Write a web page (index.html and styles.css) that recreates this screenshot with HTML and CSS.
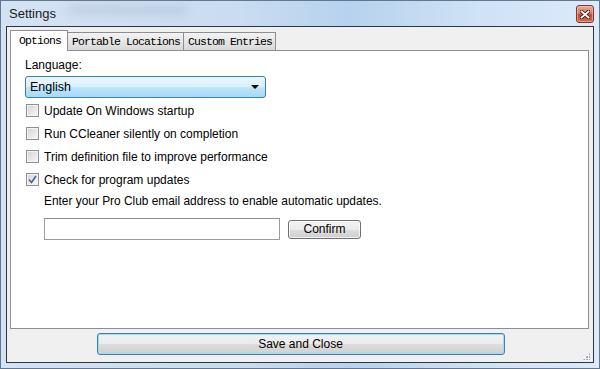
FILE: index.html
```html
<!DOCTYPE html>
<html>
<head>
    <title>Settings</title>
    <link rel="stylesheet" href="styles.css">
</head>
<body>
    <div class="window">
        <div class="titlebar">
            <span class="title">Settings</span>
            <span class="haze"></span>
            <button class="close-btn" title="Close">
                <svg width="10" height="9" viewBox="0 0 10 9">
                    <path d="M1.5 1.5 L8.5 7.5 M8.5 1.5 L1.5 7.5" stroke="#3a1a14" stroke-width="3.6" stroke-linecap="square"/>
                    <path d="M1.5 1.5 L8.5 7.5 M8.5 1.5 L1.5 7.5" stroke="#fff" stroke-width="1.8" stroke-linecap="square"/>
                </svg>
            </button>
        </div>
        <div class="client">
            <div class="tabs">
                <div class="tab active">Options</div>
                <div class="tab">Portable Locations</div>
                <div class="tab">Custom Entries</div>
            </div>
            <div class="panel">
                <div class="label">Language:</div>
                <div class="combo">
                    <span>English</span>
                    <span class="arrow"></span>
                </div>
                <div class="check-row"><span class="checkbox"></span>Update On Windows startup</div>
                <div class="check-row"><span class="checkbox"></span>Run CCleaner silently on completion</div>
                <div class="check-row"><span class="checkbox"></span>Trim definition file to improve performance</div>
                <div class="check-row">
                    <span class="checkbox checked">
                        <svg width="9" height="9" viewBox="0 0 9 9">
                            <path d="M1 4.5 L3.5 7.5 L8 1" fill="none" stroke="#4b5f96" stroke-width="1.6"/>
                        </svg>
                    </span>Check for program updates
                </div>
                <div class="pro-club">
                    <div class="hint">Enter your Pro Club email address to enable automatic updates.</div>
                    <div class="email-row">
                        <input type="text" class="email">
                        <button class="btn confirm">Confirm</button>
                    </div>
                </div>
            </div>
            <div class="footer">
                <button class="btn default">Save and Close</button>
            </div>
            <span class="grip"></span>
        </div>
    </div>
</body>
</html>
```

FILE: styles.css
```css
body {
    margin: 0;
    font-family: 'Liberation Sans', Arial, sans-serif;
    font-size: 12px;
    color: #000;
}
.window {
    width: 600px;
    height: 369px;
    box-sizing: border-box;
    border: 1px solid #62788f;
    padding: 0 5px 5px 5px;
    display: flex;
    flex-direction: column;
    background: linear-gradient(90deg, #d4e3f3 0%, #c9dcf1 40%, #b6d2ee 58%, #cfe2f6 80%, #dceafa 100%);
}
.titlebar {
    height: 25px;
    display: flex;
    align-items: flex-start;
    justify-content: space-between;
    position: relative;
}
.title {
    font-size: 13px;
    margin: 5px 0 0 3px;
    color: #1b1b1b;
}
.haze {
    position: absolute;
    left: 62px;
    top: 4px;
    width: 120px;
    height: 10px;
    border-radius: 6px;
    background: rgba(150, 165, 185, 0.25);
    filter: blur(4px);
}
.close-btn {
    width: 18px;
    height: 18px;
    margin-top: 4px;
    padding: 0;
    border: 1px solid #7a3a2c;
    border-radius: 3px;
    background: linear-gradient(#e8ab98 0%, #d97a63 45%, #c8472b 55%, #d66d4e 100%);
    display: flex;
    align-items: center;
    justify-content: center;
    box-shadow: inset 0 0 0 1px rgba(255, 210, 195, 0.5);
}
.client {
    flex: 1;
    position: relative;
    border: 1px solid #30353b;
    background: #f0f0f0;
    display: flex;
    flex-direction: column;
    padding: 3px 4px 0 3px;
}
.tabs {
    display: flex;
    align-items: flex-end;
    height: 20px;
    font-family: 'Liberation Mono', 'Courier New', monospace;
    font-size: 11.5px;
    letter-spacing: -0.9px;
}
.tab {
    height: 17px;
    line-height: 17px;
    padding: 0 3px 0 4px;
    border: 1px solid #8c8e94;
    border-bottom: none;
    border-left: none;
    background: linear-gradient(#f3f3f3, #e6e6e6 50%, #d8d8d8);
}
.tab.active {
    height: 20px;
    line-height: 19px;
    padding: 0 6px 0 8px;
    margin-bottom: -1px;
    border-left: 1px solid #8c8e94;
    background: #fff;
    position: relative;
    z-index: 1;
}
.panel {
    flex: 1;
    border: 1px solid #8c8e94;
    background: #fff;
    padding: 7px 14px 0 14px;
}
.label {
    line-height: 15px;
    margin-bottom: 3px;
}
.combo {
    width: 241px;
    height: 22px;
    box-sizing: border-box;
    border: 1px solid #3c7fb1;
    border-radius: 3px;
    background: linear-gradient(#eaf6fd 0%, #d9f0fc 50%, #bee6fd 51%, #a7d9f5 100%);
    display: flex;
    align-items: center;
    justify-content: space-between;
    padding: 0 6px 0 4px;
    margin-bottom: 1px;
    font-size: 12.5px;
}
.arrow {
    width: 0;
    height: 0;
    border-left: 4px solid transparent;
    border-right: 4px solid transparent;
    border-top: 4px solid #000;
}
.check-row {
    height: 23px;
    display: flex;
    align-items: center;
}
.checkbox {
    width: 13px;
    height: 13px;
    box-sizing: border-box;
    margin: 0 5px 0 1px;
    border: 1px solid #8f8f8f;
    background: linear-gradient(135deg, #d4d4d4, #f8f8f8);
    box-shadow: inset 0 0 0 1px #f4f4f4;
    display: flex;
    align-items: center;
    justify-content: center;
}
.pro-club {
    margin: 3px 0 0 19px;
}
.hint {
    line-height: 15px;
    font-size: 11.9px;
}
.email-row {
    display: flex;
    align-items: center;
    margin-top: 9px;
}
.email {
    width: 236px;
    height: 22px;
    box-sizing: border-box;
    margin: 0;
    border: 1px solid #9a9ca3;
    border-top-color: #8d8f96;
}
.btn {
    font-family: 'Liberation Sans', Arial, sans-serif;
    font-size: 12px;
    color: #000;
    padding: 0;
    border-radius: 3px;
    background: linear-gradient(#f2f2f2 0%, #ebebeb 50%, #dddddd 51%, #cfcfcf 100%);
    box-shadow: inset 0 0 0 1px rgba(255, 255, 255, 0.7);
}
.confirm {
    width: 73px;
    height: 19px;
    margin-left: 8px;
    border: 1px solid #707070;
}
.footer {
    height: 33px;
    display: flex;
    justify-content: center;
    align-items: flex-start;
}
.default {
    width: 408px;
    height: 22px;
    margin: 4px 0 0 2px;
    border: 1px solid #3c7fb1;
    box-shadow: inset 0 0 0 1px #9fdcf7;
}
.grip {
    position: absolute;
    right: 3px;
    bottom: 2px;
    width: 7px;
    height: 7px;
    background:
        radial-gradient(circle at 1px 1px, #a5a5a5 0.8px, transparent 1px) 0 0 / 3px 3px;
    clip-path: polygon(100% 0, 100% 100%, 0 100%);
}
```
